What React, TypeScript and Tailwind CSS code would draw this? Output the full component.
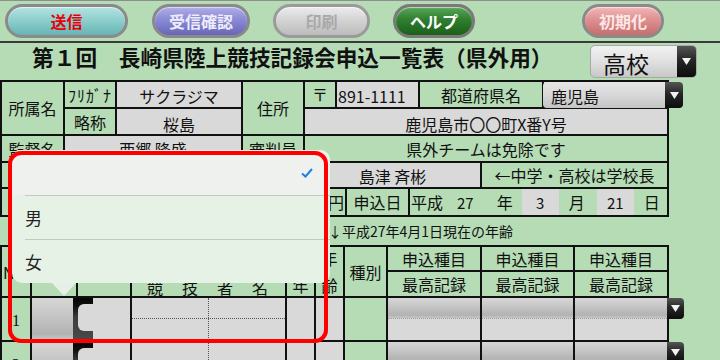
import React from "react";

type CP = { g?: boolean; className?: string; children?: React.ReactNode };
function Cell({ g, className = "", children }: CP) {
  return (
    <div
      className={`flex items-center justify-center leading-none text-[16px] whitespace-nowrap ${
        g ? "bg-[#d9d9d9]" : "bg-[#b5dcb5]"
      } ${className}`}
    >
      {children}
    </div>
  );
}

function Arrow({ className = "" }: { className?: string }) {
  return (
    <div
      className={`flex items-center justify-center bg-[linear-gradient(180deg,#555_0%,#262626_45%,#0c0c0c_100%)] ${className}`}
    >
      <svg width="9" height="7" viewBox="0 0 9 7">
        <polygon points="0,0 9,0 4.5,7" fill="#f2f2f2" />
      </svg>
    </div>
  );
}

const sel =
  "bg-[linear-gradient(180deg,#d6d6d6_0%,#cbcbcb_30%,#bebebe_60%,#b2b2b2_85%,#c6c6c6_100%)]";

function DataRow({ row, n }: { row: string; n: string }) {
  return (
    <>
      <Cell className={`col-start-1 ${row} font-['Liberation_Serif',serif] pt-[4px]`}>{n}</Cell>
      <div className={`col-start-2 ${row} relative ${sel}`}>
        <div className="absolute left-[41px] top-0 bottom-0 w-[20px] z-10 bg-[linear-gradient(180deg,#050505_0%,#111_20%,#3c3c3c_45%,#4a4a4a_100%)]" />
      </div>
      <div className={`col-start-3 ${row} relative bg-[#d9d9d9]`}>
        <div className="absolute left-0 top-[6px] h-[27px] w-[52px] rounded-[6px] bg-[#d9d9d9] z-20" />
      </div>
      <div className={`col-start-4 ${row} relative bg-[#d9d9d9]`}>
        <div className="absolute left-0 right-0 top-[20px] border-t border-dotted border-[#555]" />
        <div className="absolute top-0 bottom-0 left-[76px] border-l border-dotted border-[#555]" />
      </div>
      <div className={`col-start-5 ${row} bg-[#d9d9d9]`} />
      <div className={`col-start-6 ${row} bg-[#d9d9d9]`} />
      <div className={`col-start-7 ${row} bg-[#b5dcb5]`} />
      <div className={`col-start-8 ${row} flex flex-col`}>
        <div className={`h-[20px] ${sel}`} />
        <div className="flex-1 border-t border-dotted border-[#9a9a9a] bg-[#d9d9d9]" />
      </div>
      <div className={`col-start-9 ${row} flex flex-col`}>
        <div className={`h-[20px] ${sel}`} />
        <div className="flex-1 border-t border-dotted border-[#9a9a9a] bg-[#d9d9d9]" />
      </div>
      <div className={`col-start-10 ${row} relative flex flex-col`}>
        <div className={`h-[20px] ${sel}`} />
        <div className="flex-1 border-t border-dotted border-[#9a9a9a] bg-[#d9d9d9]" />
        <Arrow className="absolute right-[-17px] top-0 h-[21px] w-[17px] rounded-r-[4px] z-10" />
      </div>
    </>
  );
}

const btn =
  "h-[34px] rounded-full border-[3px] flex items-center justify-center text-[16px] font-bold leading-none shadow-[inset_0_1px_1px_rgba(255,255,255,0.6)]";

export default function App() {
  return (
    <div className="relative w-[720px] h-[360px] overflow-hidden bg-[#b5dcb5] font-['Noto_Sans_CJK_JP','Noto_Sans',sans-serif] text-[#111]">
      {/* toolbar */}
      <div className="h-[43px] border-t border-[#8e8e8e] border-b-2 border-b-[#3a3a3a] flex items-start pt-[3px]">
        <div
          className={`${btn} ml-[5px] w-[123px] border-[#8a8a8a] bg-[linear-gradient(180deg,#b4e3e1_0%,#8fd0ce_45%,#66b5b3_100%)] text-[#e8000b]`}
        >
          送信
        </div>
        <div
          className={`${btn} ml-[24px] w-[98px] border-[#8a8a8a] bg-[linear-gradient(180deg,#aeaee8_0%,#8a8ad6_45%,#6767b6_100%)] text-[#ececfa]`}
        >
          受信確認
        </div>
        <div
          className={`${btn} ml-[23px] w-[97px] border-[#9a9a9a] bg-[linear-gradient(180deg,#ececec_0%,#d4d4d4_45%,#bcbcbc_100%)] text-[#a9a9a9]`}
        >
          印刷
        </div>
        <div
          className={`${btn} ml-[23px] w-[82px] border-[#7a7a7a] bg-[linear-gradient(180deg,#5aa85a_0%,#2f7f2f_45%,#1b601b_100%)] text-white`}
        >
          ヘルプ
        </div>
        <div
          className={`${btn} ml-[107px] w-[82px] border-[#8a8a8a] bg-[linear-gradient(180deg,#f2b8b8_0%,#de9090_45%,#c56e6e_100%)] text-[#fbe6e6]`}
        >
          初期化
        </div>
      </div>

      {/* title row */}
      <div className="h-[37px] flex items-start">
        <div className="ml-[32px] mt-[3px] text-[21.7px] font-bold leading-[22px] whitespace-nowrap">
          第１回　長崎県陸上競技記録会申込一覧表（県外用）
        </div>
        <div className="ml-auto mr-[23px] mt-[2px] h-[33px] w-[107px] flex rounded-[5px] overflow-hidden border border-[#a8a8a8] bg-[linear-gradient(180deg,#f2f2f2_0%,#e0e0e0_50%,#c8c8c8_100%)]">
          <div className="flex-1 flex items-center pl-[12px] pt-[3px] text-[23px] leading-none">高校</div>
          <Arrow className="w-[19px] h-full" />
        </div>
      </div>

      {/* upper table */}
      <div className="w-[669px] bg-[#111] p-[2px] flex flex-col gap-[2px]">
        <div className="grid gap-[2px] grid-cols-[61px_50px_124px_60px_30px_81px_122px_123px] grid-rows-[25px_25px]">
          <Cell className="col-start-1 row-start-1 row-span-2">所属名</Cell>
          <Cell className="col-start-2 row-start-1 tracking-[1px]">ﾌﾘｶﾞﾅ</Cell>
          <Cell g className="col-start-3 row-start-1 pt-[3px]">
            サクラジマ
          </Cell>
          <Cell className="col-start-4 row-start-1 row-span-2">住所</Cell>
          <Cell className="col-start-5 row-start-1 items-start pt-[4px]">〒</Cell>
          <Cell g className="col-start-6 row-start-1 justify-start pl-[1px] pt-[2px]">
            891-1111
          </Cell>
          <Cell className="col-start-7 row-start-1">都道府県名</Cell>
          <Cell className="col-start-8 row-start-1 relative">
            <div className="absolute left-[-1px] top-0 h-[26px] w-[140px] flex rounded-[4px] overflow-hidden z-10 bg-[linear-gradient(180deg,#e6e6e6_0%,#d8d8d8_50%,#c4c4c4_100%)]">
              <div className="flex-1 flex items-center pl-[8px] pt-[2px] text-[16px] leading-none">鹿児島</div>
              <Arrow className="w-[18px] h-full" />
            </div>
          </Cell>
          <Cell className="col-start-2 row-start-2">略称</Cell>
          <Cell g className="col-start-3 row-start-2 pt-[5px]">
            桜島
          </Cell>
          <Cell g className="col-start-5 col-span-4 row-start-2 pt-[4px]">
            鹿児島市〇〇町X番Y号
          </Cell>
        </div>

        <div className="grid gap-[2px] grid-cols-[61px_176px_60px_1fr] h-[25px]">
          <Cell>監督名</Cell>
          <Cell g>西郷 隆盛</Cell>
          <Cell>審判員</Cell>
          <Cell>県外チームは免除です</Cell>
        </div>

        <div className="grid gap-[2px] grid-cols-[61px_176px_60px_175px_1fr] h-[24px]">
          <Cell>代表者</Cell>
          <Cell g></Cell>
          <Cell>校長名</Cell>
          <Cell g className="pt-[2px]">島津 斉彬</Cell>
          <Cell>←中学・高校は学校長</Cell>
        </div>

        <div className="grid gap-[2px] grid-cols-[61px_176px_60px_40px_61px_1fr] h-[26px]">
          <Cell>参加料</Cell>
          <Cell g></Cell>
          <Cell>合計</Cell>
          <Cell className="justify-end pr-[1px]">円</Cell>
          <Cell>申込日</Cell>
          <div className="flex items-stretch bg-[#b5dcb5] text-[15px] leading-none">
            <span className="ml-[1px] flex items-center text-[16px]">平成</span>
            <span className="ml-[14px] flex items-center">27</span>
            <span className="ml-[23px] flex items-center text-[16px]">年</span>
            <span className="ml-[9px] w-[37px] flex items-center justify-center bg-[#d9d9d9]">3</span>
            <span className="ml-[10px] flex items-center text-[16px]">月</span>
            <span className="ml-[12px] w-[37px] flex items-center justify-center bg-[#d9d9d9]">21</span>
            <span className="ml-[10px] flex items-center text-[16px]">日</span>
          </div>
        </div>
      </div>

      {/* note line */}
      <div className="h-[28px] flex items-center pl-[328px] text-[14px] leading-none">
        ↓平成27年4月1日現在の年齢
      </div>

      {/* lower table */}
      <div className="w-[669px] bg-[#111] p-[2px] grid gap-[2px] grid-cols-[28px_44px_52px_153px_27px_27px_41px_92px_91px_92px] grid-rows-[23px_24px_42px_42px]">
        <Cell className="col-start-1 row-start-1 row-span-2 justify-start pl-[1px]">No</Cell>
        <Cell className="col-start-2 row-start-1 row-span-2">性別</Cell>
        <Cell className="col-start-3 row-start-1 row-span-2">学校</Cell>
        <Cell className="col-start-4 row-start-1 tracking-[1px]">ﾌﾘｶﾞﾅ</Cell>
        <div className="col-start-4 row-start-2 flex items-center pl-[15px] pt-[6px] gap-[19px] bg-[#b5dcb5] text-[16px] leading-none">
          <span>競</span>
          <span>技</span>
          <span>者</span>
          <span>名</span>
        </div>
        <div className="col-start-5 row-start-1 row-span-2 flex flex-col items-center justify-between py-[3px] bg-[#b5dcb5] text-[16px] leading-none">
          <span>学</span>
          <span>年</span>
        </div>
        <div className="col-start-6 row-start-1 row-span-2 flex flex-col items-center justify-between py-[3px] bg-[#b5dcb5] text-[16px] leading-none">
          <span>年</span>
          <span>齢</span>
        </div>
        <Cell className="col-start-7 row-start-1 row-span-2">種別</Cell>
        <Cell className="col-start-8 row-start-1">申込種目</Cell>
        <Cell className="col-start-9 row-start-1">申込種目</Cell>
        <Cell className="col-start-10 row-start-1">申込種目</Cell>
        <Cell className="col-start-8 row-start-2">最高記録</Cell>
        <Cell className="col-start-9 row-start-2">最高記録</Cell>
        <Cell className="col-start-10 row-start-2">最高記録</Cell>
        <DataRow row="row-start-3" n="1" />
        <DataRow row="row-start-4" n="2" />
      </div>

      {/* popup */}
      <div className="absolute left-[12px] top-[150px] w-[318px] h-[133px] rounded-[10px] bg-[#e6f2e6] z-30">
        <div className="h-[45px] rounded-t-[10px] bg-[#eff1ef] flex items-center justify-end pr-[17px]">
          <svg width="12" height="10" viewBox="0 0 12 10">
            <polyline points="1,5.5 4.5,8.5 11,1" fill="none" stroke="#1f7fe6" strokeWidth="2" />
          </svg>
        </div>
        <div className="ml-[13px] h-[44px] border-t border-[#bccdbc] flex items-center text-[17px] leading-none text-[#222]">
          男
        </div>
        <div className="ml-[13px] h-[44px] border-t border-[#bccdbc] flex items-center text-[17px] leading-none text-[#222]">
          女
        </div>
        <div className="absolute left-[40px] top-[133px] w-0 h-0 border-l-[12px] border-r-[12px] border-t-[13px] border-l-transparent border-r-transparent border-t-[#e6f0e6]" />
      </div>

      {/* red highlight */}
      <div className="absolute left-[8px] top-[151px] w-[320px] h-[192px] border-4 border-[#ff0000] rounded-[13px] z-40 pointer-events-none" />
    </div>
  );
}
